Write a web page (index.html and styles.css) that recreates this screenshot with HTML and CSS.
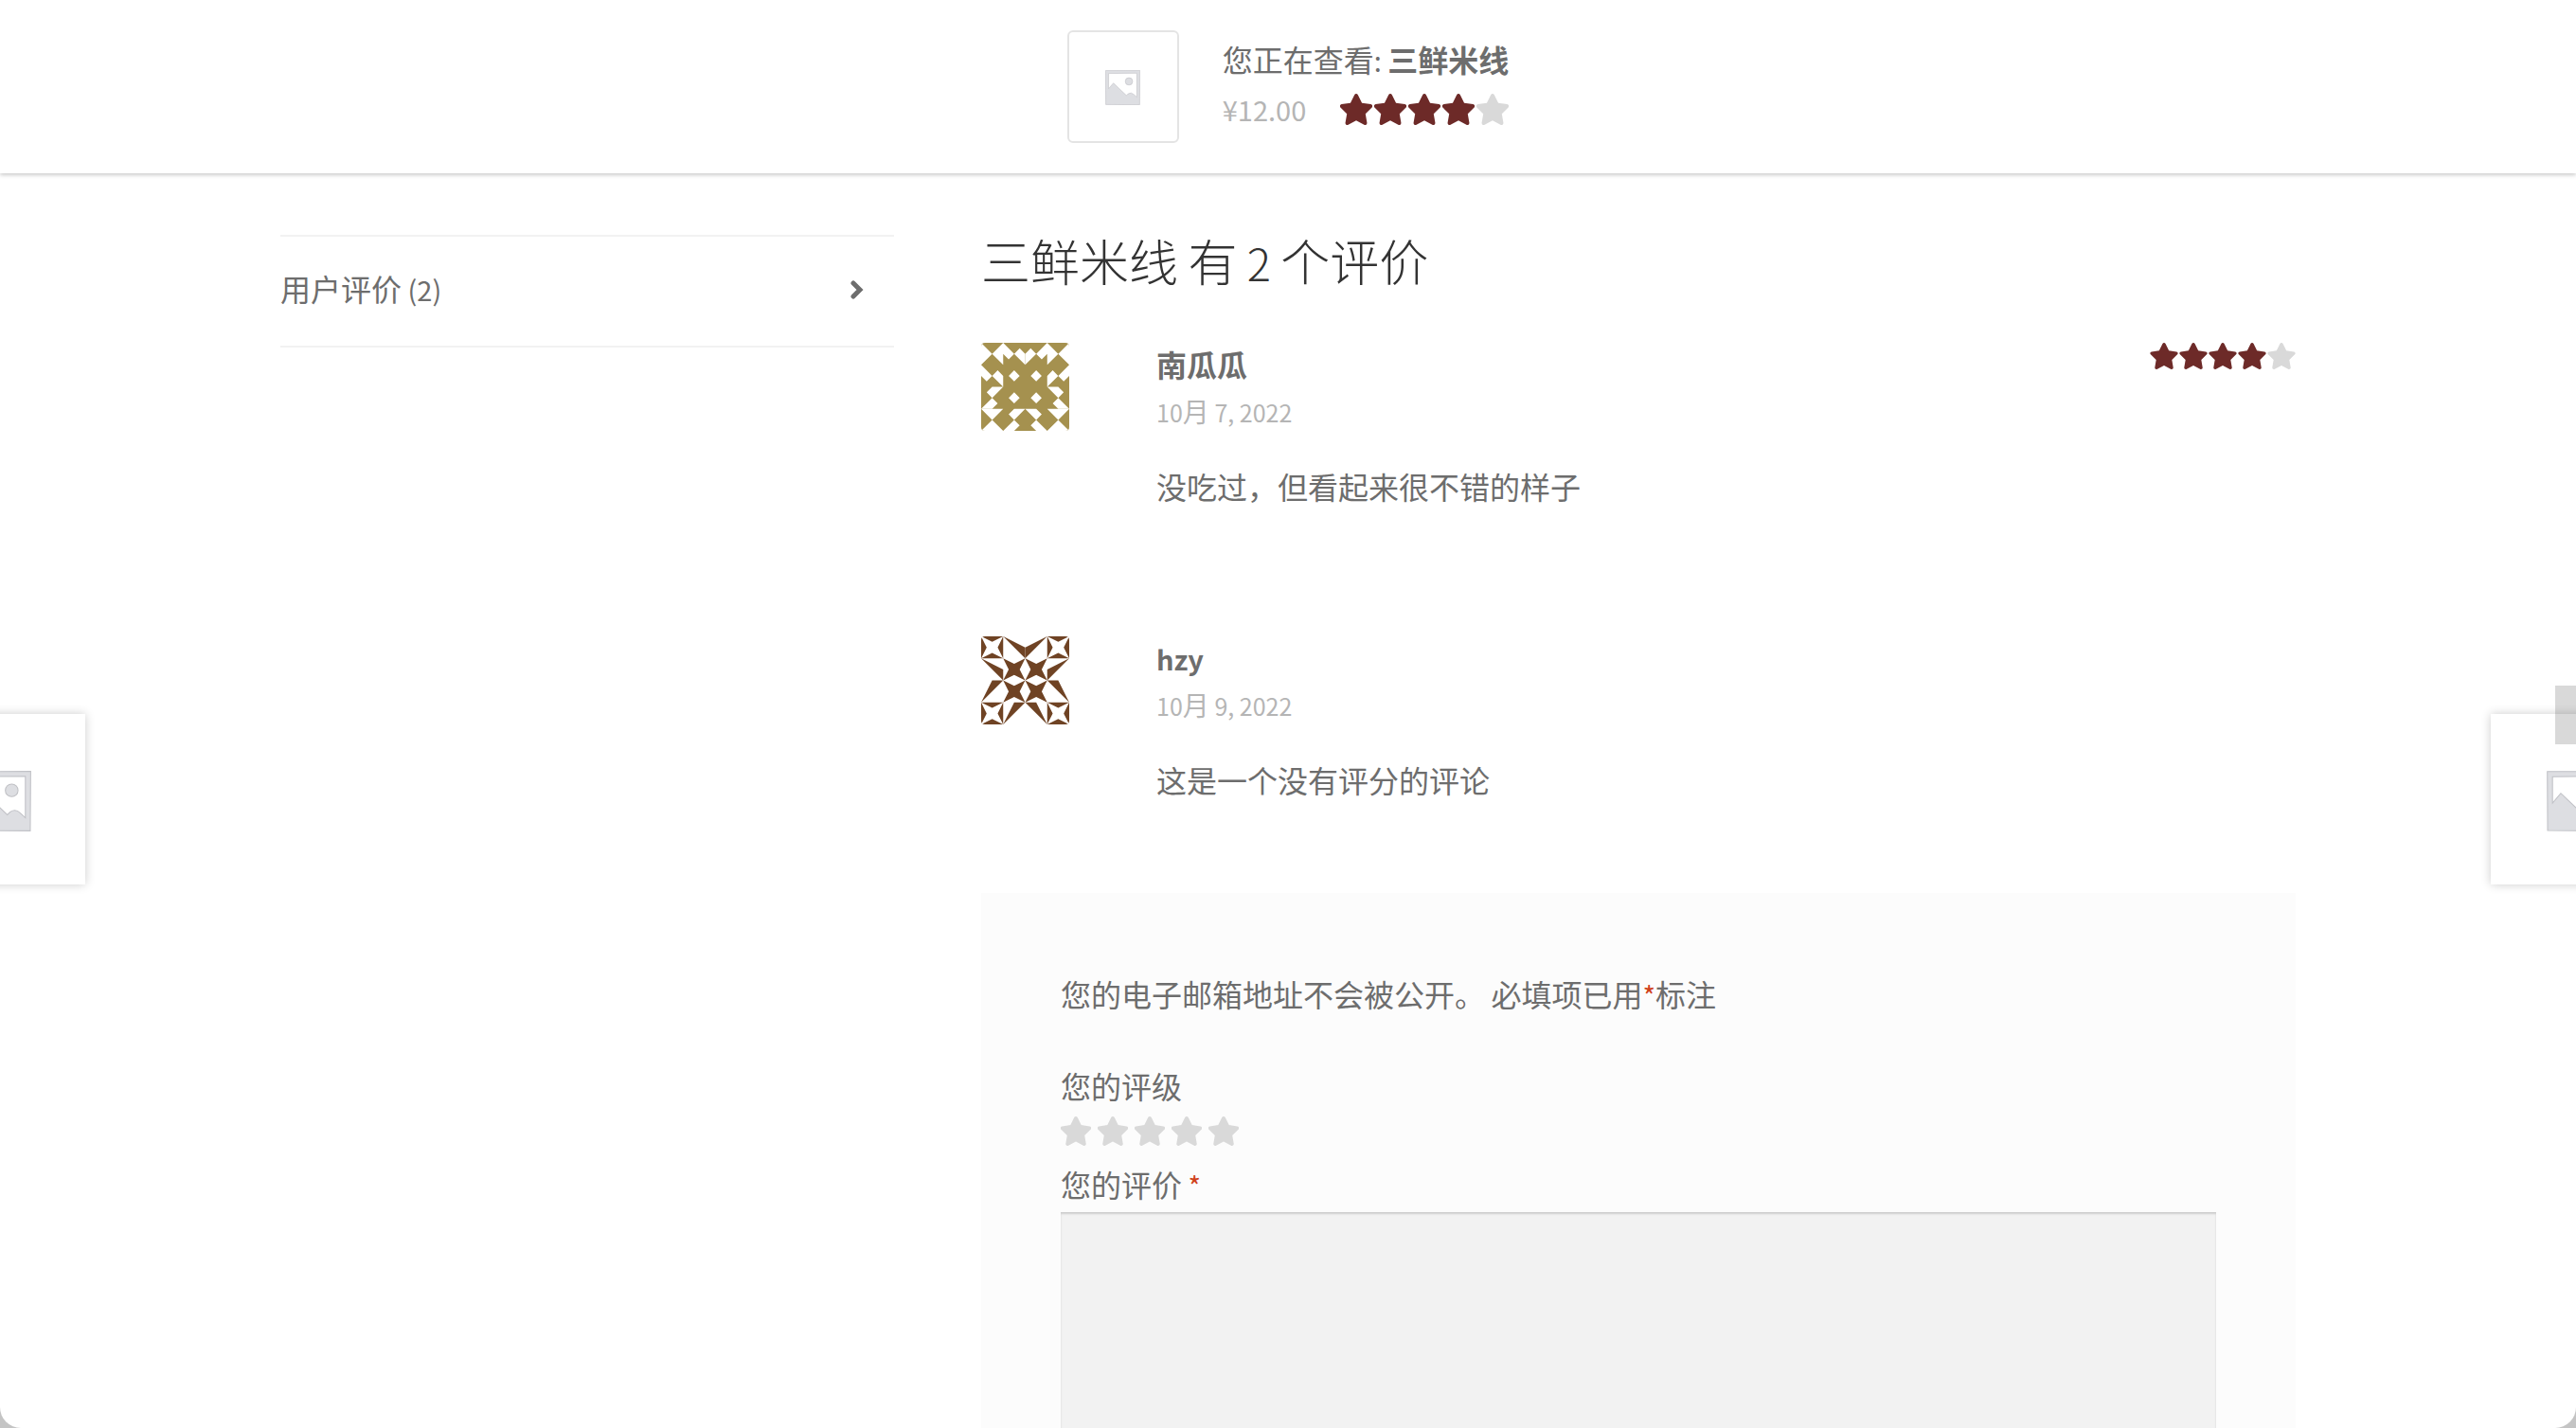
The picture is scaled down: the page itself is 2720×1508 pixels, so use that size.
FILE: index.html
```html
<!DOCTYPE html>
<html lang="zh-CN">
<head>
<meta charset="utf-8">
<meta name="viewport" content="width=device-width, initial-scale=1">
<title>三鲜米线</title>
<link rel="stylesheet" href="styles.css">
</head>
<body>
<svg class="defs" aria-hidden="true">
  <symbol id="star" viewBox="24 0 528 512"><path d="M259.3 17.8L194 150.2 47.9 171.5c-26.2 3.8-36.7 36.1-17.7 54.6l105.7 103-25 145.5c-4.5 26.3 23.2 46 46.4 33.7L288 439.6l130.7 68.7c23.2 12.2 50.9-7.4 46.4-33.7l-25-145.5 105.7-103c19-18.5 8.5-50.8-17.7-54.6L382 150.2 316.7 17.8c-11.7-23.6-45.6-23.9-57.4 0z"/></symbol>
  <symbol id="placeholder" viewBox="0 0 62 62">
    <path fill="#dddee2" stroke="#c0c1c6" stroke-width="1" fill-rule="evenodd" d="M.7.8 61.4.6 61 61.4 1 61zM6 6V33L14.500 23 37.500 45 40.500 42Q46 38.500 50.500 43L56 48V5.500z"/>
    <circle cx="42" cy="20" r="6.500" fill="#dddee2" stroke="#c0c1c5" stroke-width="1"/>
  </symbol>
</svg>
<div class="page">
  <header class="product-bar">
    <div class="thumb"><svg class="thumb-icon"><use href="#placeholder"/></svg></div>
    <div class="product-info">
      <div class="product-title">您正在查看<span class="latin">: </span><strong>三鲜米线</strong></div>
      <div class="product-meta">
        <span class="price latin">¥12.00</span>
        <div class="stars stars-large" role="img" aria-label="4 / 5">
          <svg><use href="#star"/></svg><svg><use href="#star"/></svg><svg><use href="#star"/></svg><svg><use href="#star"/></svg><svg class="empty"><use href="#star"/></svg>
        </div>
      </div>
    </div>
  </header>

  <main class="content">
    <nav class="tabs">
      <a class="tab" href="#reviews"><span>用户评价<span class="latin"> (2)</span></span>
        <svg class="chevron" viewBox="0 0 14 20"><path d="M3 3 10 10 3 17" fill="none" stroke="currentColor" stroke-width="5" stroke-linecap="round"/></svg>
      </a>
    </nav>

    <section class="reviews" id="reviews">
      <h2>三鲜米线<span class="latin"> </span>有<span class="latin"> 2 </span>个评价</h2>
      <ol class="comments">
        <li class="comment">
          <svg class="avatar" viewBox="0 0 16 16">
            <path fill="#a5914f" d="M0 0H16V16H0z"/>
            <g fill="#fff">
              <g id="olive-half">
                <path d="M0 0 2 2 0 4zM2 2 4 0V4zM4 0 6 2 5 3 4 2zM6 2 7 1 8 2V4z"/>
                <path d="M0 4 2 6 1 7 0 6zM2 6 3 5 4 6V8zM4 8 2 10 1 9 2 8zM0 12 2 10 3 11 2 12z"/>
                <path d="M0 12H4L2 14zM0 16H4L2 14zM5 13 6 12H8L6 14zM6 14 7 15 6 16H4z"/>
                <path d="M6 5 7 6 6 7 5 6zM6 9 7 10 6 11 5 10z"/>
              </g>
              <use href="#olive-half" transform="matrix(-1 0 0 1 16 0)"/>
            </g>
          </svg>
          <div class="comment-body">
            <div class="comment-head">
              <div>
                <strong class="author">南瓜瓜</strong>
                <time class="date" datetime="2022-10-07"><span class="digits">10</span>月<span class="digits"> 7, 2022</span></time>
              </div>
              <div class="stars stars-small" role="img" aria-label="4 / 5">
                <svg><use href="#star"/></svg><svg><use href="#star"/></svg><svg><use href="#star"/></svg><svg><use href="#star"/></svg><svg class="empty"><use href="#star"/></svg>
              </div>
            </div>
            <p>没吃过，但看起来很不错的样子</p>
          </div>
        </li>
        <li class="comment">
          <svg class="avatar" viewBox="0 0 16 16">
            <path fill="#fff" d="M0 0H16V16H0z"/>
            <g fill="#6f4324">
              <g id="brown-half">
                <path d="M0 0H4L2 1zM4 0V4L3 2zM4 4H0L2 3zM0 4V0L1 2z"/>
                <path d="M0 12H4L2 13zM4 12V16L3 14zM4 16H0L2 15zM0 16V12L1 14z"/>
                <path d="M4 4 6 5 8 4 7 6 8 8 6 7 4 8 5 6zM4 8 6 9 8 8 7 10 8 12 6 11 4 12 5 10z"/>
                <path d="M4 0 8 2V4zM0 4 4 6V8zM4 8H2L0 12zM6 12H8L4 16z"/>
              </g>
              <use href="#brown-half" transform="matrix(-1 0 0 1 16 0)"/>
            </g>
          </svg>
          <div class="comment-body">
            <div class="comment-head">
              <div>
                <strong class="author"><span class="latin">hzy</span></strong>
                <time class="date" datetime="2022-10-09"><span class="digits">10</span>月<span class="digits"> 9, 2022</span></time>
              </div>
            </div>
            <p>这是一个没有评分的评论</p>
          </div>
        </li>
      </ol>

      <form class="review-form">
        <p class="notice">您的电子邮箱地址不会被公开。<span class="latin"> </span>必填项已用<span class="latin required">*</span>标注</p>
        <fieldset class="rating">
          <legend>您的评级</legend>
          <div class="rating-stars">
            <label><input type="radio" name="rating" value="1" aria-label="1"><svg><use href="#star"/></svg></label>
            <label><input type="radio" name="rating" value="2" aria-label="2"><svg><use href="#star"/></svg></label>
            <label><input type="radio" name="rating" value="3" aria-label="3"><svg><use href="#star"/></svg></label>
            <label><input type="radio" name="rating" value="4" aria-label="4"><svg><use href="#star"/></svg></label>
            <label><input type="radio" name="rating" value="5" aria-label="5"><svg><use href="#star"/></svg></label>
          </div>
        </fieldset>
        <label class="field-label" for="comment">您的评价<span class="latin"> <span class="required">*</span></span></label>
        <textarea id="comment" name="comment" required></textarea>
      </form>
    </section>
  </main>

  <a class="product-nav previous" href="#previous" aria-label="上一个"><svg><use href="#placeholder"/></svg></a>
  <a class="product-nav next" href="#next" aria-label="下一个"><svg><use href="#placeholder"/></svg></a>
  <div class="side-handle"></div>
</div>
</body>
</html>
```
FILE: styles.css
```css
* {
  box-sizing: border-box;
}

body {
  margin: 0;
  background: #c4c4c4;
  color: #6d6d6d;
  font-family: "Noto Sans CJK SC", "Noto Sans", sans-serif;
  font-size: 32px;
  line-height: 52px;
}

.defs {
  position: absolute;
  width: 0;
  height: 0;
}

svg {
  display: block;
}

p,
h2,
ol,
fieldset {
  margin: 0;
  padding: 0;
}

a {
  color: inherit;
  text-decoration: none;
}

/* Latin glyphs run large beside the Chinese ones, so they are set smaller */
.latin {
  font-size: 29px;
  line-height: 1;
  white-space: pre;
}

.page {
  position: relative;
  height: 100vh;
  overflow: hidden;
  background: #fff;
  border-radius: 0 0 22px 22px;
}

/* Product bar */
.product-bar {
  display: flex;
  justify-content: center;
  align-items: flex-start;
  gap: 46px;
  padding: 32px;
  box-shadow: 0 2px 4px rgba(0, 0, 0, 0.2);
}

.thumb {
  display: grid;
  place-items: center;
  width: 118px;
  height: 119px;
  padding-top: 2px;
  border: 2px solid #e4e4e4;
  border-radius: 6px;
}

.thumb-icon {
  width: 37px;
  height: 37px;
}

.product-info {
  padding-top: 4px;
}

.product-title {
  height: 52px;
}

.product-meta {
  display: flex;
  align-items: center;
  justify-content: space-between;
  height: 54px;
}

.price {
  color: #b5b5b5;
}

/* Stars */
.stars {
  display: flex;
  fill: #6d2a28;
}

.stars .empty {
  fill: #d9d9d9;
}

.stars-large {
  gap: 2px;
}

.stars-large svg {
  width: 34px;
  height: 33px;
}

.stars-small {
  gap: 1px;
  margin-top: 4px;
}

.stars-small svg {
  width: 30px;
  height: 28px;
}

/* Content columns */
.content {
  display: grid;
  grid-template-columns: 648fr 1388fr;
  gap: 92px;
  width: calc(100% - 96px);
  max-width: 2128px;
  margin: 0 auto;
  padding-top: 65px;
}

.tab {
  display: flex;
  align-items: center;
  justify-content: space-between;
  padding: 28px 32px 35px 0;
  border-top: 2px solid #f2f2f2;
  border-bottom: 2px solid #f2f2f2;
}

.chevron {
  width: 14px;
  height: 20px;
  margin-top: 4px;
}

h2 {
  margin-bottom: 56px;
  color: #333;
  font-size: 52px;
  font-weight: 300;
  line-height: 54px;
}

h2 .latin {
  font-size: 47px;
}

/* Comments */
.comments {
  display: grid;
  gap: 129px;
  list-style: none;
}

.comment {
  display: grid;
  grid-template-columns: 93px 1fr;
  gap: 92px;
}

.avatar {
  width: 93px;
  height: 93px;
  margin-top: 4px;
  border-radius: 4px;
}

.comment-head {
  display: flex;
  align-items: flex-start;
  justify-content: space-between;
  margin-bottom: 28px;
}

.author {
  display: block;
  height: 50px;
}

.date {
  display: block;
  height: 51px;
  color: #b5b5b5;
  font-size: 28px;
}

.digits {
  font-size: 25px;
  white-space: pre;
}

/* Review form */
.review-form {
  margin-top: 94px;
  padding: 80px 84px 84px;
  background: #fcfcfc;
}

.notice {
  margin-bottom: 45px;
}

.required {
  color: #d0421b;
}

.rating {
  border: 0;
}

.rating legend {
  padding: 0;
}

.rating-stars {
  display: flex;
  gap: 7px;
  height: 52px;
  padding-top: 7px;
  fill: #d9d9d9;
}

.rating-stars label {
  position: relative;
}

.rating-stars input {
  position: absolute;
  inset: 0;
  margin: 0;
  opacity: 0;
}

.rating-stars svg {
  width: 32px;
  height: 31px;
}

.field-label {
  display: block;
  margin-bottom: 4px;
}

textarea {
  display: block;
  width: 100%;
  height: 360px;
  padding: 20px;
  border: 0;
  border-radius: 0;
  background: #f2f2f2;
  box-shadow: inset 0 2px 2px rgba(0, 0, 0, 0.15);
  color: inherit;
  font: inherit;
  resize: none;
}

/* Previous and next product cards, half outside the window */
.product-nav {
  position: absolute;
  top: 50%;
  display: grid;
  place-items: center;
  width: 180px;
  height: 180px;
  padding: 3px 0 0 2px;
  background: #fff;
  box-shadow: 0 0 10px rgba(0, 0, 0, 0.2);
}

.product-nav svg {
  width: 64px;
  height: 64px;
}

.previous {
  left: -90px;
}

.next {
  right: -90px;
}

.side-handle {
  position: absolute;
  top: 48%;
  right: 0;
  width: 22px;
  height: 62px;
  background: rgba(0, 0, 0, 0.15);
}
```
